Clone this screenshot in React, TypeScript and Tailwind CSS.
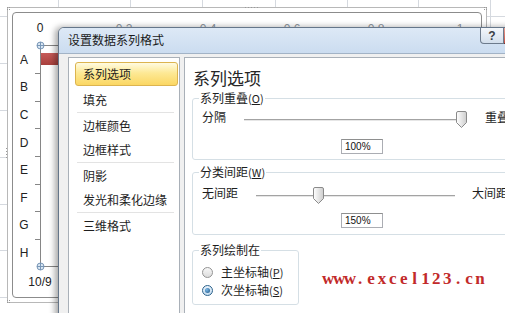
import React from "react";

const cjk = '"Noto Sans CJK SC", "Noto Sans", sans-serif';
const latin = '"Liberation Sans", Arial, sans-serif';

function Thumb({ id }: { id: string }) {
  return (
    <svg width="11" height="17" viewBox="0 0 11 17">
      <defs>
        <linearGradient id={id} x1="0" x2="1" y1="0" y2="0">
          <stop offset="0" stopColor="#ffffff" />
          <stop offset="1" stopColor="#cdcdcd" />
        </linearGradient>
      </defs>
      <path
        d="M0.5 2 Q0.5 0.5 2 0.5 H9 Q10.5 0.5 10.5 2 V11.5 L5.5 16.5 L0.5 11.5 Z"
        fill={`url(#${id})`}
        stroke="#8a8a8a"
      />
    </svg>
  );
}

function SliderRow({
  left,
  right,
  labelW,
  trackW,
  thumbX,
  gap,
  id,
}: {
  left: string;
  right: string;
  labelW: number;
  trackW: number;
  thumbX: number;
  gap: number;
  id: string;
}) {
  return (
    <div className="flex items-center h-[20px] ml-[9px] text-[12px] leading-[20px] text-[#1e1e1e]">
      <div style={{ width: labelW }} className="shrink-0 whitespace-nowrap">
        {left}
      </div>
      <div style={{ width: trackW }} className="relative h-[20px] shrink-0">
        <div className="absolute left-0 right-0 top-[12px] h-[2px] border-t border-[#a3a3a3] border-b border-b-[#e6e6e6]" />
        <div className="absolute top-[4px]" style={{ left: thumbX }}>
          <Thumb id={id} />
        </div>
      </div>
      <div style={{ marginLeft: gap }} className="whitespace-nowrap">
        {right}
      </div>
    </div>
  );
}

function ValueBox({ value }: { value: string }) {
  return (
    <div className="ml-[148px] w-[42px] h-[15px] border border-[#abadb3] border-t-[#8e8f8f] bg-white pl-[3px] text-[10px] leading-[13px] text-[#111]" style={{ fontFamily: latin }}>
      {value}
    </div>
  );
}

function Radio({ checked, label, key2 }: { checked?: boolean; label: string; key2: string }) {
  return (
    <div className="flex items-center h-[18px] ml-[9px] text-[12px] text-[#1e1e1e]">
      <div
        className={
          "w-[11px] h-[11px] rounded-full border flex items-center justify-center shrink-0 " +
          (checked
            ? "border-[#2c628b] bg-[linear-gradient(to_bottom,#e8f2fb,#c4dcf0)]"
            : "border-[#939393] bg-[linear-gradient(to_bottom,#f7f7f7,#dcdcdc)]")
        }
      >
        {checked && (
          <div className="w-[5px] h-[5px] rounded-full bg-[radial-gradient(circle_at_35%_35%,#7ab8e8,#1d5482)]" />
        )}
      </div>
      <span className="ml-[8px] whitespace-nowrap leading-[18px]">
        {label}
        <span className="text-[11px]">
          (<span className="underline">{key2}</span>)
        </span>
      </span>
    </div>
  );
}

export default function App() {
  const rowLabels = ["A", "B", "C", "D", "E", "F", "G", "H"];
  const top = 45.5;
  const step = 27.6;
  const mark = "www.excel123.cn".split("");
  return (
    <div
      className="relative w-[505px] h-[313px] overflow-hidden bg-white"
      style={{ fontFamily: cjk }}
    >
      {/* worksheet grid */}
      <svg className="absolute left-0 top-0" width="505" height="313">
        {[58, 130, 202, 275, 347, 418, 490].map((x) => (
          <line key={x} x1={x + 0.5} x2={x + 0.5} y1={0} y2={313} stroke="#d5d9df" />
        ))}
        {[16, 63, 110, 157, 204, 250, 297].map((y) => (
          <line key={y} x1={0} x2={505} y1={y + 0.5} y2={y + 0.5} stroke="#d5d9df" />
        ))}
      </svg>

      {/* chart object */}
      <div className="absolute left-[7px] top-[7px] w-[480px] h-[296px] border border-[#b8b8b8] bg-white p-[4px]">
        <div className="w-full h-full rounded-[4px] border border-[#8c8c8c] bg-white" />
      </div>

      {/* chart drawing */}
      <svg className="absolute left-0 top-0" width="505" height="313" style={{ fontFamily: latin }}>
        {[
          [7, 7],
          [484, 7],
          [7, 300],
          [484, 300],
        ].map(([x, y], i) => (
          <g key={i} fill="#9a9a9a">
            <rect x={x} y={y} width="1" height="1" />
            <rect x={x + 2} y={y} width="1" height="1" />
            <rect x={x} y={y + 2} width="1" height="1" />
            <rect x={x + 2} y={y + 2} width="1" height="1" />
          </g>
        ))}
        <g fill="#9a9a9a">
          {[245, 248, 251, 254, 257].map((x) => (
            <rect key={x} x={x} y={7} width="1" height="1" />
          ))}
          {[148, 151, 154, 157].map((y) => (
            <rect key={y} x={6} y={y} width="1" height="1" />
          ))}
        </g>

        <text x={40} y={32} fontSize="12" fill="#222" textAnchor="middle">
          0
        </text>
        {[
          ["0.2", 124],
          ["0.4", 208],
          ["0.6", 292],
          ["0.8", 376],
          ["1", 460],
        ].map(([t, x]) => (
          <text key={t as string} x={x as number} y={33} fontSize="12" fill="#8e959e" textAnchor="middle">
            {t}
          </text>
        ))}

        <defs>
          <linearGradient id="bar" x1="0" x2="0" y1="0" y2="1">
            <stop offset="0" stopColor="#c65b58" />
            <stop offset="1" stopColor="#a8403d" />
          </linearGradient>
        </defs>
        <rect x={40.5} y={53} width={30} height={12} fill="url(#bar)" />

        <line x1={40.5} x2={40.5} y1={45} y2={266.5} stroke="#868686" />
        <line x1={40.5} x2={80} y1={45.5} y2={45.5} stroke="#868686" />
        <line x1={40.5} x2={80} y1={266.5} y2={266.5} stroke="#868686" />
        {Array.from({ length: 7 }).map((_, i) => {
          const y = Math.round(top + step * (i + 1)) + 0.5;
          return <line key={i} x1={35} x2={40.5} y1={y} y2={y} stroke="#868686" />;
        })}

        {rowLabels.map((l, i) => (
          <text key={l} x={24} y={top + step * (i + 0.5) + 4.5} fontSize="12" fill="#222" textAnchor="middle">
            {l}
          </text>
        ))}

        {[45.5, 266.5].map((y) => (
          <g key={y}>
            <circle cx={40.5} cy={y} r={3.5} fill="#dbe8f4" stroke="#7896b6" />
            <line x1={37} x2={44} y1={y} y2={y} stroke="#7896b6" />
            <line x1={40.5} x2={40.5} y1={y - 3.5} y2={y + 3.5} stroke="#7896b6" />
          </g>
        ))}

        <text x={40} y={286} fontSize="12" fill="#222" textAnchor="middle">
          10/9
        </text>
      </svg>

      {/* dialog window */}
      <div className="absolute left-[58px] top-[27px] w-[495px] h-[300px] flex flex-col rounded-t-[6px] border border-[#65768a] bg-[#f0f0f0] shadow-[-3px_0_6px_rgba(0,0,0,0.35)] overflow-hidden">
        <div className="h-[26px] shrink-0 flex items-start bg-[linear-gradient(to_bottom,#dde9f6,#cbdcf0)] border-b border-[#a2b3c6]">
          <span className="pl-[9px] pt-[4px] text-[12px] leading-[16px] text-[#1a1a1a] whitespace-nowrap">
            设置数据系列格式
          </span>
          <div className="ml-auto mr-[5px] flex">
            <div className="w-[24px] h-[16px] border border-t-0 border-[#6d7b8c] rounded-bl-[4px] bg-[linear-gradient(to_bottom,#f4f7fb,#d3dfec)] flex items-center justify-center text-[12px] leading-[14px] font-bold text-[#3a3f47]" style={{ fontFamily: latin }}>
              ?
            </div>
            <div className="w-[43px] h-[16px] border border-t-0 border-l-0 border-[#6d3b3b] rounded-br-[4px] bg-[linear-gradient(to_bottom,#e8a093,#c75247)]" />
          </div>
        </div>

        <div className="flex-1 flex pl-[9px] pt-[3px]">
          <div className="w-[112px] shrink-0 border border-[#a9b0b8] bg-white pt-[4px] text-[12px] text-[#1e1e1e]">
            <div className="ml-[6px] mr-[1px] h-[24px] rounded-[3px] border border-[#dcb44f] bg-[linear-gradient(to_bottom,#fffbe1,#fde995_45%,#fbd763)] pl-[7px] leading-[22px]">
              系列选项
            </div>
            <div className="mt-[2px] h-[24px] pl-[14px] leading-[24px]">填充</div>
            <div className="ml-[8px] mr-[5px] h-px bg-[#e3e3e3] mb-[1px]" />
            <div className="h-[24px] pl-[14px] leading-[24px]">边框颜色</div>
            <div className="h-[24px] pl-[14px] leading-[24px]">边框样式</div>
            <div className="ml-[8px] mr-[5px] h-px bg-[#e3e3e3] mb-[1px]" />
            <div className="h-[24px] pl-[14px] leading-[24px]">阴影</div>
            <div className="h-[24px] pl-[14px] leading-[24px] whitespace-nowrap">发光和柔化边缘</div>
            <div className="ml-[8px] mr-[5px] h-px bg-[#e3e3e3] mb-[1px]" />
            <div className="h-[24px] pl-[14px] leading-[24px]">三维格式</div>
          </div>

          <div className="ml-[4px] flex-1 border border-[#a9b0b8] bg-white pt-[10px] text-[#1e1e1e]">
            <div className="ml-[8px] text-[17px] leading-[20px] text-[#262626]">系列选项</div>

            <fieldset className="mt-[3px] ml-[7px] border border-[#d5dfe5] rounded-[3px] pb-[5px]">
              <legend className="ml-[6px] px-[1px] text-[12px] leading-[14px] whitespace-nowrap">
                系列重叠<span className="text-[11px]">(<span className="underline">O</span>)</span>
              </legend>
              <div className="mt-[2px]">
                <SliderRow left="分隔" right="重叠" labelW={42} trackW={219} thumbX={212} gap={22} id="t1" />
              </div>
              <div className="mt-[12px]">
                <ValueBox value="100%" />
              </div>
            </fieldset>

            <fieldset className="mt-[5px] ml-[7px] border border-[#d5dfe5] rounded-[3px] pb-[6px]">
              <legend className="ml-[6px] px-[1px] text-[12px] leading-[14px] whitespace-nowrap">
                分类间距<span className="text-[11px]">(<span className="underline">W</span>)</span>
              </legend>
              <div className="mt-[4px]">
                <SliderRow left="无间距" right="大间距" labelW={54} trackW={199} thumbX={57} gap={17} id="t2" />
              </div>
              <div className="mt-[10px]">
                <ValueBox value="150%" />
              </div>
            </fieldset>

            <fieldset className="mt-[8px] ml-[7px] w-[107px] border border-[#d5dfe5] rounded-[3px] pb-[5px]">
              <legend className="ml-[6px] px-[1px] text-[12px] leading-[14px] whitespace-nowrap">
                系列绘制在
              </legend>
              <div className="mt-[6px]">
                <Radio label="主坐标轴" key2="P" />
                <Radio label="次坐标轴" key2="S" checked />
              </div>
            </fieldset>
          </div>
        </div>
      </div>

      {/* watermark */}
      <div
        className="absolute left-[322px] top-[270px] flex text-[17px] leading-[18px] font-bold text-[#c22a2a] whitespace-nowrap"
        style={{ fontFamily: '"Liberation Serif", "Times New Roman", serif' }}
      >
        {mark.map((c, i) => (
          <span key={i} className="inline-block w-[10.9px] text-center">
            {c}
          </span>
        ))}
      </div>
    </div>
  );
}
